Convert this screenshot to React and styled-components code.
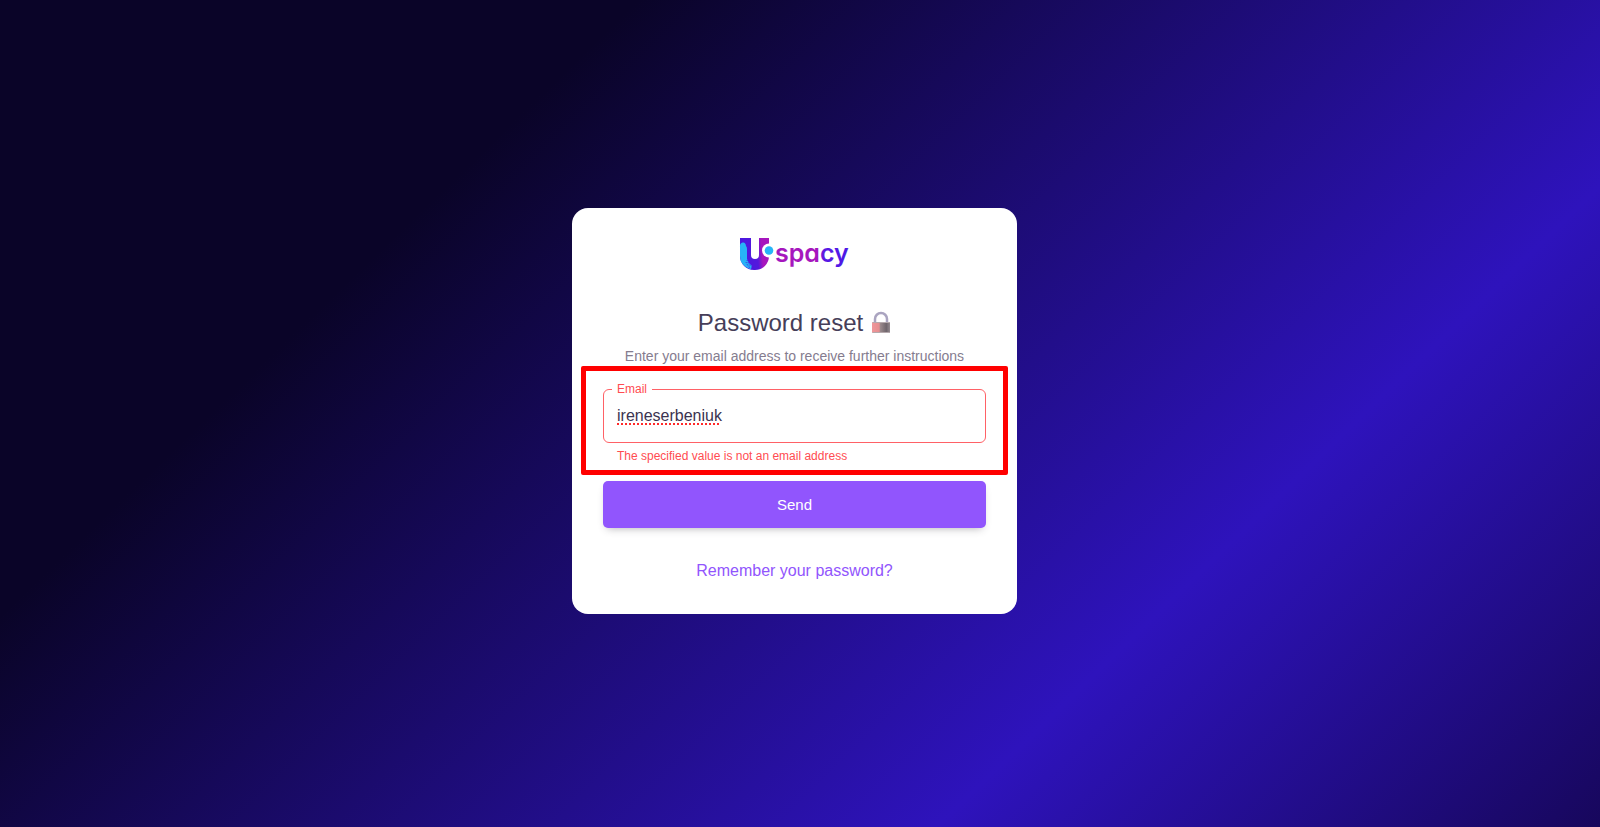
import React, { useState } from 'react'
import styled, { createGlobalStyle } from 'styled-components'

const GlobalStyle = createGlobalStyle`
    * {
        box-sizing: border-box;
    }
    body {
        margin: 0;
        font-family: "Liberation Sans", Arial, sans-serif;
    }
`
const Container = styled.div`
    min-height: 100vh;
    display: flex;
    align-items: center;
    justify-content: center;
    padding: 16px 27px 21px 16px;
    background: linear-gradient(136deg, #0a0428 0%, #0a0428 26%, #2e13bc 73%, #17075c 100%);
`
const Card = styled.main`
    width: 100%;
    max-width: 445px;
    display: flex;
    flex-direction: column;
    padding: 25px 31px 33px;
    border-radius: 16px;
    background-color: white;
`
const LogoLink = styled.a`
    align-self: center;
    display: flex;
    margin-bottom: 34px;
`
const Wordmark = styled.text`
    font-family: Inter, sans-serif;
    font-size: 25px;
    font-weight: 600;
    font-feature-settings: "cv11";
`
const Title = styled.h1`
    display: flex;
    align-items: center;
    justify-content: center;
    gap: 8px;
    margin: 0 0 7px;
    font-size: 24px;
    line-height: 32px;
    font-weight: 400;
    color: #463e59;
`
const Description = styled.p`
    margin: 0;
    font-size: 14px;
    line-height: 20px;
    text-align: center;
    color: #857c8f;
`
const Form = styled.form`
    display: flex;
    flex-direction: column;
`
const Highlight = styled.div`
    margin: 0 -22px 6px;
    padding: 11px 17px 5px;
    border: 5px solid #ff0000;
    border-radius: 2px;
`
const Outline = styled.fieldset`
    margin: 0;
    padding: 0 12px 0 8px;
    border: 1px solid ${props => props.$error ? '#ff6166' : '#c4c0cc'};
    border-radius: 6px;
`
const Legend = styled.legend`
    padding: 0 5px;
    font-size: 12px;
    line-height: 14px;
    color: #ff4c51;
`
const Input = styled.input`
    display: block;
    width: 100%;
    height: 46px;
    padding: 0 5px 7px;
    border: none;
    outline: none;
    background: transparent;
    font-family: inherit;
    font-size: 16px;
    color: #3b3350;
    text-decoration: ${props => props.$error ? 'underline dotted #ff2a2a 2px' : 'none'};
    text-underline-offset: 3px;
`
const HelperText = styled.p`
    margin: 4px 14px 0;
    font-size: 12px;
    line-height: 18px;
    color: #ff4c51;
`
const Button = styled.button`
    height: 47px;
    border: none;
    border-radius: 5px;
    background-color: #9155fd;
    box-shadow: 0 4px 8px -4px rgba(58, 53, 65, 0.42);
    font-family: inherit;
    font-size: 15px;
    color: white;
    cursor: pointer;
`
const BackLink = styled.a`
    align-self: center;
    margin-top: 33px;
    font-size: 16px;
    line-height: 20px;
    color: #9155fd;
    text-decoration: none;
`

const Logo = () => (
    <svg width="112" height="40" viewBox="0 0 112 40" role="img" aria-label="Uspacy">
        <defs>
            <linearGradient id="word" x1="0" y1="0" x2="1" y2="0">
                <stop offset="0" stopColor="#9a17c4" />
                <stop offset="0.1" stopColor="#a616bd" />
                <stop offset="0.58" stopColor="#a616bd" />
                <stop offset="0.66" stopColor="#5a18e4" />
                <stop offset="1" stopColor="#4b18e6" />
            </linearGradient>
            <linearGradient id="mark" x1="0" y1="0.1" x2="1" y2="0">
                <stop offset="0" stopColor="#4b18e0" />
                <stop offset="0.55" stopColor="#5318dc" />
                <stop offset="0.72" stopColor="#a616bd" />
            </linearGradient>
        </defs>
        <path d="M1 5h11v17a4 4 0 0 0 8 0V5h10v18a14 14 0 0 1-14 14h-1a14 14 0 0 1-14-14z" fill="url(#mark)" />
        <path d="M1 14a3 4 0 0 1 6-1q1 1 1 3v10q1 4 5 7l-1 3.5Q1 33 1 23z" fill="#27b4f7" />
        <path d="M8 27q2 6 7 8.5M7 29q2 5 6 7" fill="none" stroke="#4b18e0" strokeDasharray="1 1" />
        <circle cx="30" cy="17.5" r="7" fill="white" />
        <circle cx="30" cy="17.5" r="4.3" fill="#27b4f7" />
        <Wordmark x="36" y="29" fill="url(#word)">spacy</Wordmark>
    </svg>
)

const Lock = () => (
    <svg width="20" height="24" viewBox="0 0 20 24" aria-hidden="true">
        <defs>
            <linearGradient id="body" x1="0" y1="0" x2="1" y2="0">
                <stop offset="0" stopColor="#f0979b" />
                <stop offset="0.4" stopColor="#e58e90" />
                <stop offset="0.46" stopColor="#9b8a8d" />
                <stop offset="0.8" stopColor="#6f656c" />
                <stop offset="1" stopColor="#948a90" />
            </linearGradient>
        </defs>
        <path d="M4 12V8a6 6 0 0 1 12 0v4" fill="none" stroke="#aaa4c0" strokeWidth="2.5" />
        <rect x="1" y="11" width="18" height="11" rx="1" fill="url(#body)" />
        <path d="M1.5 11.5h17M1.5 21.5h17" stroke="#b5a9ad" />
    </svg>
)

const App = () => {
    const [email, setEmail] = useState('ireneserbeniuk')
    const error = !email.includes('@')

  return (
    <Container>
        <GlobalStyle />
        <Card>
            <LogoLink href="#"><Logo /></LogoLink>
            <Title>Password reset <Lock /></Title>
            <Description>Enter your email address to receive further instructions</Description>
            <Form noValidate onSubmit={e => e.preventDefault()}>
                <Highlight>
                    <Outline $error={error}>
                        <Legend><label htmlFor="email">Email</label></Legend>
                        <Input
                            id="email"
                            type="email"
                            value={email}
                            $error={error}
                            aria-invalid={error}
                            aria-describedby="email-helper"
                            onChange={e => setEmail(e.target.value)}
                        />
                    </Outline>
                    <HelperText id="email-helper">
                        {error ? 'The specified value is not an email address' : '\u00a0'}
                    </HelperText>
                </Highlight>
                <Button type="submit">Send</Button>
            </Form>
            <BackLink href="#login">Remember your password?</BackLink>
        </Card>
    </Container>
)}

export default App
